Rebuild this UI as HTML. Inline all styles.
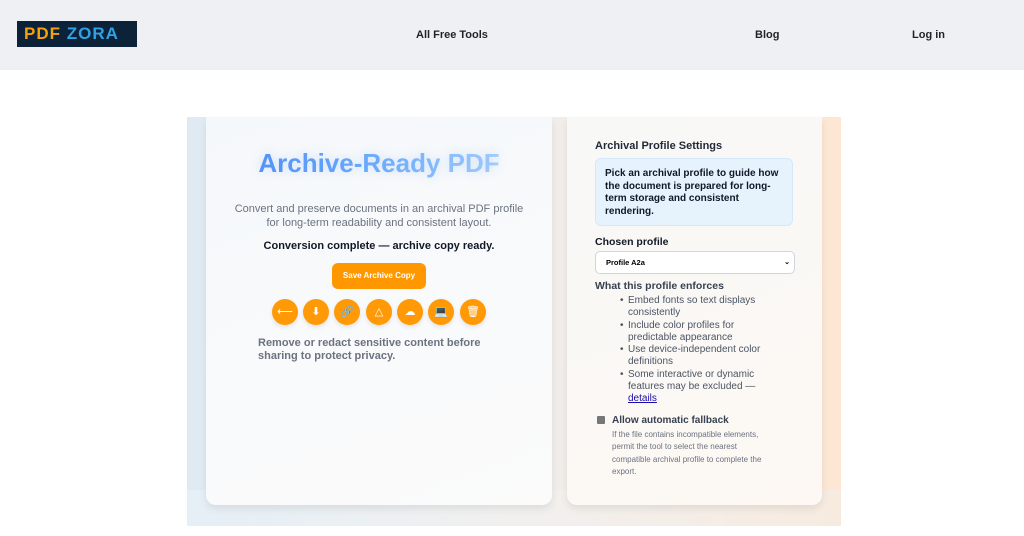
<!DOCTYPE html>
<html><head><style>
*{margin:0;padding:0;box-sizing:border-box}
body{width:1024px;height:536px;overflow:hidden;background:#fff;font-family:"Liberation Sans",sans-serif;position:relative}
header{position:absolute;left:0;top:0;width:1024px;height:70px;background:#eff0f4}
.logo{position:absolute;left:17px;top:21px;width:120px;height:26px;background:#0b2238;font-weight:bold;font-size:17px;line-height:26px;padding-left:7px;letter-spacing:1px}
.nav{position:absolute;top:29px;font-size:11px;font-weight:bold;color:#1f2328}
.area{position:absolute;left:187px;top:117px;width:654px;height:409px;background:linear-gradient(90deg,#dfeaf2,#efeeed 50%,#fde7d4)}
.area:after{content:"";position:absolute;left:0;right:0;bottom:0;height:36px;background:linear-gradient(90deg,#e5eff6,#f1f0ef 50%,#f7ebe0)}
.card{position:absolute;top:117px;height:388px;border-radius:0 0 10px 10px;box-shadow:0 4px 8px rgba(0,0,0,.08);z-index:2}
.l{left:206px;width:346px;background:linear-gradient(160deg,#f5f8fb,#fbfbfb)}
.r{left:567px;width:255px;background:linear-gradient(160deg,#f8f8f6,#fdf8f4)}
.t{position:absolute;white-space:nowrap}
.ic{position:absolute;z-index:3;top:299px;width:26px;height:26px;border-radius:50%;background:#ff9a06;color:#fff;font-size:11px;text-align:center;line-height:26px;box-shadow:0 2px 4px rgba(0,0,0,.1)}
li{list-style:none;position:relative}
li:before{content:"•";position:absolute;left:-8px}
</style></head><body>
<header>
<div class="logo"><span style="color:#f5a10d">PDF</span> <span style="color:#2ea2e6">ZORA</span></div>
<div class="nav" style="left:416px">All Free Tools</div>
<div class="nav" style="left:755px">Blog</div>
<div class="nav" style="left:912px">Log in</div>
</header>
<div class="area"></div>
<div class="card l">
<div class="t" style="left:0;width:346px;text-align:center;top:31px;font-size:26px;font-weight:bold;background:linear-gradient(90deg,#4a86f5,#6fb0fb 50%,#c2defd);-webkit-background-clip:text;color:transparent;text-shadow:0 0 10px rgba(90,150,250,.25)">Archive-Ready PDF</div>
<div class="t" style="left:0;width:346px;text-align:center;top:85px;font-size:11px;line-height:14px;color:#6b7280">Convert and preserve documents in an archival PDF profile<br>for long-term readability and consistent layout.</div>
<div class="t" style="left:0;width:346px;text-align:center;top:123px;font-size:11px;font-weight:bold;color:#111827">Conversion complete — archive copy ready.</div>
<div class="t" style="left:126px;top:146px;width:94px;height:26px;background:#ff9800;border-radius:6px;color:#fff;font-size:8px;font-weight:bold;text-align:center;line-height:26px">Save Archive Copy</div>
<div class="t" style="left:52px;top:220px;font-size:11px;line-height:12.5px;color:#6b7280;font-weight:bold">Remove or redact sensitive content before<br>sharing to protect privacy.</div>
</div>
<div class="ic" style="left:272px">⟵</div>
<div class="ic" style="left:303px">⬇</div>
<div class="ic" style="left:334px">🔗</div>
<div class="ic" style="left:366px">△</div>
<div class="ic" style="left:397px">☁</div>
<div class="ic" style="left:428px">💻</div>
<div class="ic" style="left:460px">🗑</div>
<div class="card r">
<div class="t" style="left:28px;top:23px;font-size:11px;font-weight:bold;color:#1f2937">Archival Profile Settings</div>
<div class="t" style="left:28px;top:41px;width:198px;height:68px;background:#e6f3fd;border:1px solid #d3e8fa;border-radius:6px;padding:9px 9px;font-size:10px;line-height:12.5px;font-weight:bold;color:#111827;white-space:normal">Pick an archival profile to guide how the document is prepared for long-term storage and consistent rendering.</div>
<div class="t" style="left:28px;top:119px;font-size:10.5px;font-weight:bold;color:#111827">Chosen profile</div>
<div class="t" style="left:28px;top:134px;width:200px;height:23px;background:#fff;border:1px solid #d1d5db;border-radius:5px;font-size:7.5px;font-weight:bold;line-height:21px;padding-left:10px">Profile A2a<span style="position:absolute;right:4px;font-size:7px">⌄</span></div>
<div class="t" style="left:28px;top:163px;font-size:10.5px;font-weight:bold;color:#374151">What this profile enforces</div>
<ul class="t" style="left:61px;top:178px;font-size:10px;line-height:12.3px;color:#4b5563">
<li>Embed fonts so text displays<br>consistently</li>
<li>Include color profiles for<br>predictable appearance</li>
<li>Use device-independent color<br>definitions</li>
<li>Some interactive or dynamic<br>features may be excluded —<br><span style="color:#1a0dab;text-decoration:underline">details</span></li>
</ul>
<div class="t" style="left:30px;top:299px;width:8px;height:8px;background:#777;border-radius:1px"></div>
<div class="t" style="left:45px;top:298px;font-size:10px;font-weight:bold;color:#374151">Allow automatic fallback</div>
<div class="t" style="left:45px;top:312px;font-size:8px;line-height:12.4px;color:#6b7280">If the file contains incompatible elements,<br>permit the tool to select the nearest<br>compatible archival profile to complete the<br>export.</div>
</div>
</body></html>
